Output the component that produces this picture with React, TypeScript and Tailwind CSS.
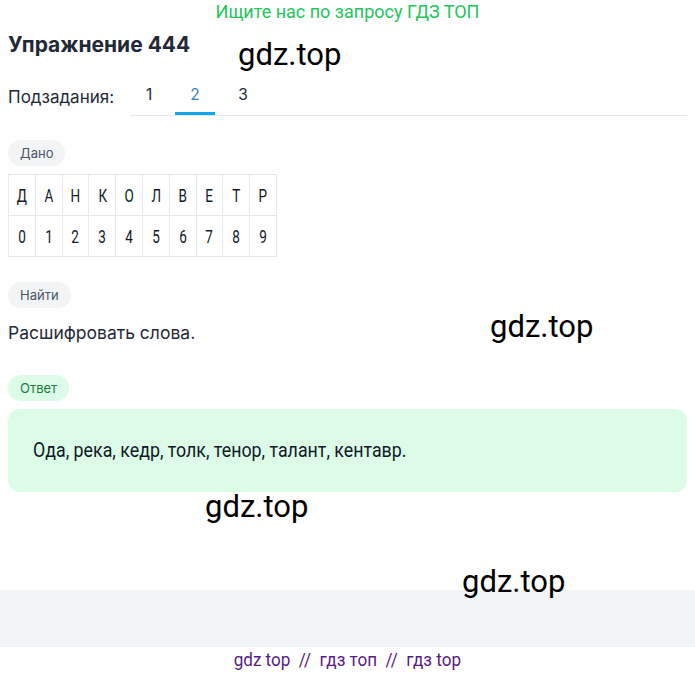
const letters = ["Д", "А", "Н", "К", "О", "Л", "В", "Е", "Т", "Р"];
const digits = ["0", "1", "2", "3", "4", "5", "6", "7", "8", "9"];

function Pill({ children, green }: { children: React.ReactNode; green?: boolean }) {
  return (
    <span
      className={
        "inline-flex h-[26px] items-center rounded-full px-[12px] text-[13px] leading-[18px] " +
        (green ? "bg-[#dcfce7] text-[#15803d]" : "bg-[#f3f4f6] text-[#4b5563]")
      }
    >
      {children}
    </span>
  );
}

function Mark({ className }: { className: string }) {
  return (
    <div
      className={
        "pointer-events-none absolute font-['Roboto',sans-serif] text-[31px] leading-none text-black " +
        className
      }
    >
      gdz.top
    </div>
  );
}

export default function App() {
  return (
    <div className="relative min-h-[675px] bg-white font-['Inter',sans-serif] text-[#1f2937]">
      <div className="pt-[1px] text-center font-['Roboto',sans-serif] text-[18px] leading-[22px] text-[#22c55e]">
        Ищите нас по запросу ГДЗ ТОП
      </div>

      <div className="px-2">
        <h1 className="mt-[9px] text-[21px] font-bold leading-[26px] text-[#1f2937]">Упражнение 444</h1>

        <div className="mt-[26px] flex items-end">
          <span className="pb-[9px] text-[17px] leading-[20px]">Подзадания:</span>
          <div className="ml-[16px] flex flex-1 border-b border-[#e5e7eb] pt-px text-[15.5px]">
            <span className="w-[38px] pb-[10px] text-center leading-[20px]">1</span>
            <span className="ml-[7px] w-[40px] border-b-[3px] border-[#0ea5e9] pb-[7px] text-center leading-[20px] text-[#3b82c4]">
              2
            </span>
            <span className="ml-[8px] w-[40px] pb-[10px] text-center leading-[20px]">3</span>
          </div>
        </div>

        <div className="mt-[24px] flex">
          <Pill>Дано</Pill>
        </div>

        <table className="mt-[8px] border-collapse font-['Roboto',sans-serif] text-[18px] text-[#111827]">
          <tbody>
            {[letters, digits].map((row, i) => (
              <tr key={i}>
                {row.map((c) => (
                  <td key={c} className="h-[41px] w-[26.8px] border border-[#e5e7eb] p-0 text-center">
                    <span className="inline-block scale-x-[0.75]">{c}</span>
                  </td>
                ))}
              </tr>
            ))}
          </tbody>
        </table>

        <div className="mt-[25px] flex">
          <Pill>Найти</Pill>
        </div>

        <p className="mt-[13px] text-[17.5px] leading-[24px]">Расшифровать слова.</p>

        <div className="mt-[30px] flex">
          <Pill green>Ответ</Pill>
        </div>

        <div className="mt-[8px] rounded-[12px] bg-[#dcfce7] px-[25px] py-[30px]">
          <p className="origin-left scale-x-[0.89] font-['Roboto',sans-serif] text-[20px] leading-[23px] text-[#111827]">
            Ода, река, кедр, толк, тенор, талант, кентавр.
          </p>
        </div>
      </div>

      <div className="mt-[98px] h-[57px] bg-[#f3f4f6]" />

      <div className="py-[2px] text-center font-['Roboto',sans-serif] text-[19px] leading-[22px] text-[#581c87]">
        <span className="inline-block scale-x-[0.9]">gdz top&nbsp; //&nbsp; гдз топ&nbsp; //&nbsp; гдз top</span>
      </div>

      <Mark className="left-[238px] top-[39px]" />
      <Mark className="left-[490px] top-[311px]" />
      <Mark className="left-[205px] top-[491px]" />
      <Mark className="left-[462px] top-[566px]" />
    </div>
  );
}
